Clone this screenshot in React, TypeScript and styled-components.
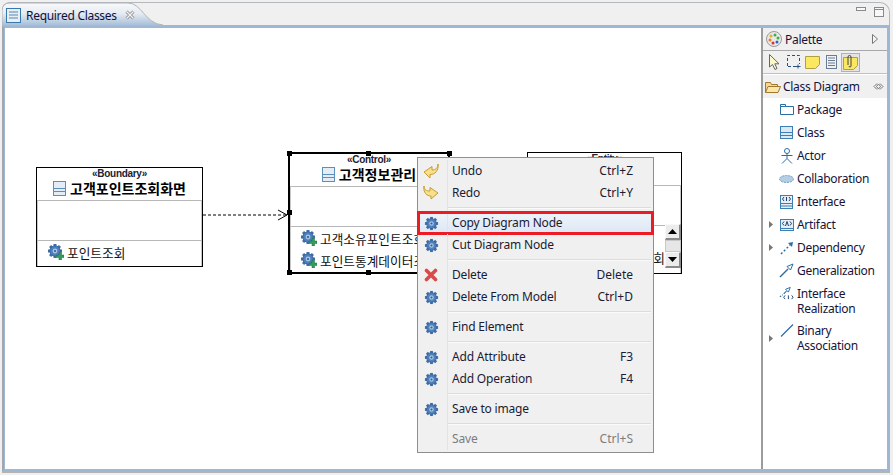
import React, { FunctionComponent } from "react";
import styled, { createGlobalStyle } from "styled-components";

const GlobalStyle = createGlobalStyle`
  html, body { margin: 0; padding: 0; background: #f0f0f0; }
  body { font-family: "Noto Sans CJK KR", "Liberation Sans", sans-serif; }
`;

const KO = `"Noto Sans CJK KR", "Noto Sans", sans-serif`;
const UI = `"Noto Sans", "Open Sans", "Liberation Sans", sans-serif`;

// window chrome
const Window = styled.div`
  width: 893px;
  height: 475px;
  overflow: hidden;
  display: flex;
  flex-direction: column;
  background: #f0f0f0;
  font-family: ${UI};
  font-size: 12px;
  letter-spacing: -0.3px;
  color: #1a1a2e;
  box-sizing: border-box;
  padding: 2px 3px 3px 2px;
`;
const TabStrip = styled.div`
  height: 22px;
  flex: none;
  position: relative;
  display: flex;
  align-items: flex-start;
  justify-content: flex-end;
  background: #f0f0f0;
  border: 1px solid #b4b8bc;
  border-bottom: none;
  border-radius: 8px 10px 0 0;
`;
const TabShape = styled.svg`
  position: absolute;
  left: -1px;
  top: -1px;
`;
const TabLabel = styled.div`
  position: absolute;
  left: 3px;
  top: 2px;
  display: flex;
  align-items: center;
  gap: 5px;
  height: 20px;
  font-size: 12px;
  color: #10103a;
`;
const TabClose = styled.svg`
  margin-left: 3px;
`;
const WinButtons = styled.div`
  display: flex;
  gap: 8px;
  align-items: flex-start;
  padding: 4px 5px 0 0;
`;
const Body = styled.div`
  flex: 1;
  display: flex;
  min-height: 0;
  border-style: solid;
  border-width: 3px 3px 3px 2px;
  border-color: #9fb7d2 #9fb7d2 #9fb7d2 #a3a7ab;
  box-shadow: 0 1px 0 #b4b4b4;
  background: #fff;
`;

// diagram
const Canvas = styled.div`
  flex: 1;
  position: relative;
  background: #fff;
  overflow: hidden;
  border-left: 1px solid #9fb7d2;
`;
const Node = styled.div<{ $x: number; $y: number; $w: number; $h: number; $bw?: number }>`
  position: absolute;
  left: ${(p) => p.$x}px;
  top: ${(p) => p.$y}px;
  width: ${(p) => p.$w}px;
  height: ${(p) => p.$h}px;
  box-sizing: border-box;
  border: ${(p) => p.$bw ?? 1}px solid #000;
  background: #fff;
  display: flex;
  flex-direction: column;
  letter-spacing: 0;
`;
const NodeHead = styled.div`
  height: 32px;
  flex: none;
  display: flex;
  flex-direction: column;
  align-items: center;
`;
const Stereotype = styled.div`
  font-family: "Liberation Sans", sans-serif;
  font-size: 10px;
  line-height: 10px;
  height: 11px;
  box-sizing: border-box;
  font-weight: bold;
  letter-spacing: -0.3px;
  color: #223;
  padding-top: 1px;
`;
const NodeTitle = styled.div`
  display: flex;
  align-items: center;
  gap: 4px;
  font-family: ${KO};
  font-weight: 700;
  font-size: 14px;
  line-height: 18px;
  white-space: nowrap;
  color: #000;
`;
const Compartment = styled.div`
  height: 40px;
  flex: none;
  border-top: 1px solid #b8b8b8;
  border-left: 1px solid #c8c8c8;
  border-right: 1px solid #c8c8c8;
  box-sizing: border-box;
`;
const OpList = styled.div<{ $end?: boolean }>`
  flex: 1;
  border-top: 1px solid #b8b8b8;
  border-left: 1px solid #c8c8c8;
  border-right: 1px solid #c8c8c8;
  display: flex;
  flex-direction: column;
  align-items: ${(p) => (p.$end ? "flex-end" : "flex-start")};
  padding: ${(p) => (p.$end ? "20px 15px 0 0" : "0 0 0 10px")};
  overflow: hidden;
`;
const Op = styled.div`
  display: flex;
  align-items: center;
  gap: 3px;
  height: 22px;
  flex: none;
  font-family: ${KO};
  font-size: 12.7px;
  white-space: nowrap;
  color: #111;
`;
const Handle = styled.div<{ $x: number; $y: number }>`
  position: absolute;
  left: ${(p) => p.$x}px;
  top: ${(p) => p.$y}px;
  width: 5px;
  height: 5px;
  background: #000;
`;
const Arrow = styled.svg`
  position: absolute;
  left: 198px;
  top: 178px;
`;
const ScrollBar = styled.div`
  position: absolute;
  left: 660px;
  top: 196px;
  width: 16px;
  height: 44px;
  display: flex;
  flex-direction: column;
  background: #f0f0f0;
`;
const ScrollBtn = styled.div`
  height: 16px;
  flex: none;
  box-sizing: border-box;
  border-style: solid;
  border-width: 1px 2px 2px 1px;
  border-color: #f8f8f8 #8a8a8a #8a8a8a #f8f8f8;
  background: #ececec;
  display: flex;
  align-items: center;
  justify-content: center;
`;
const ScrollThumb = styled.div`
  flex: 1;
  box-sizing: border-box;
  border: 1px solid #c8c8c8;
  background: #e6e6e6;
`;

// context menu
const Menu = styled.div`
  position: absolute;
  left: 412px;
  top: 129px;
  width: 237px;
  height: 296px;
  box-sizing: border-box;
  border: 1px solid #8f8f8f;
  background: #f0f0f0;
  padding: 2px;
  display: flex;
  flex-direction: column;
  font-size: 12px;
  letter-spacing: -0.18px;
  color: #1b1b33;
`;
const MenuRow = styled.div<{ $disabled?: boolean; $hot?: boolean }>`
  height: 22px;
  flex: none;
  display: grid;
  grid-template-columns: 28px 1fr auto;
  align-items: center;
  position: relative;
  color: ${(p) => (p.$disabled ? "#7d7d7d" : "inherit")};
  background: ${(p) =>
    p.$hot ? "linear-gradient(#f0f4fa, #dbe7f5)" : "transparent"};
`;
const MenuIcon = styled.div`
  display: flex;
  justify-content: center;
  align-items: center;
  height: 100%;
  box-sizing: border-box;
  border-right: 1px solid #e2e3e3;
  padding-right: 5px;
`;
const MenuLabel = styled.span`
  padding-left: 4px;
  margin-top: -2px;
`;
const MenuKey = styled.span`
  padding-right: 18px;
  margin-top: -2px;
  text-align: right;
  letter-spacing: 0;
`;
const MenuSep = styled.div`
  height: 8px;
  flex: none;
  display: grid;
  grid-template-columns: 28px 1fr;
  align-items: center;
  &::before {
    content: "";
    height: 100%;
    box-sizing: border-box;
    border-right: 1px solid #e2e3e3;
  }
  &::after {
    content: "";
    height: 2px;
    background: #dcdcdc;
    border-bottom: 1px solid #fafafa;
    box-sizing: border-box;
  }
`;
const HotBox = styled.div`
  position: absolute;
  left: -3px;
  right: -3px;
  top: -1px;
  bottom: -1px;
  border: 3px solid #ed1c24;
  pointer-events: none;
`;

// palette
const Palette = styled.div`
  width: 124px;
  flex: none;
  border-left: 2px solid #9c9c9c;
  background: #fff;
  display: flex;
  flex-direction: column;
  color: #14143a;
`;
const PaletteHead = styled.div`
  height: 22px;
  display: flex;
  align-items: center;
  background: #f0f0f0;
  border-bottom: 1px solid #a8a8a8;
  padding: 0 9px 0 3px;
  gap: 3px;
  font-size: 12px;
`;
const Spacer = styled.div`
  flex: 1;
`;
const ToolRow = styled.div`
  height: 22px;
  display: flex;
  align-items: center;
  background: #f0f0f0;
  padding-left: 2px;
  border-bottom: 1px solid #c0c0c0;
`;
const ToolBtn = styled.div<{ $on?: boolean }>`
  width: 19px;
  height: 19px;
  display: flex;
  align-items: center;
  justify-content: center;
  box-sizing: border-box;
  ${(p) => (p.$on ? "border: 1px solid #b0b0b0; background: #e4e4e4;" : "")}
`;
const Drawer = styled.div`
  height: 23px;
  margin-top: 1px;
  display: flex;
  align-items: center;
  padding: 0 3px 0 2px;
  gap: 2px;
  background: #f0f0f0;
`;
const PalList = styled.div`
  display: flex;
  flex-direction: column;
`;
const PalItem = styled.div<{ $two?: boolean }>`
  min-height: 23px;
  display: grid;
  grid-template-columns: 8px 15px 1fr;
  column-gap: 2px;
  align-items: center;
  padding: ${(p) => (p.$two ? "4px 0 3px 6px" : "0 0 0 6px")};
  line-height: 15px;
`;
const PalIcon = styled.div<{ $two?: boolean }>`
  display: flex;
  align-items: center;
  justify-content: center;
  height: 15px;
  align-self: ${(p) => (p.$two ? "start" : "center")};
`;
const PalText = styled.div`
  font-size: 12px;
  padding-left: 1px;
`;

// icons
const ClassIcon: FunctionComponent = () => (
  <svg width="13" height="15" viewBox="0 0 13 15">
    <rect x="0.5" y="0.5" width="12" height="14" fill="#e4edf6" stroke="#5b90bd" />
    <path d="M1 7.5H12M1 10.5H12" stroke="#5b90bd" />
  </svg>
);

const Gear: FunctionComponent<{ plus?: boolean }> = ({ plus }) => (
  <svg width={plus ? 16 : 15} height={plus ? 16 : 15} viewBox="0 0 16 16">
    <g transform={plus ? "translate(7 7)" : "translate(8 8)"}>
      {[0, 45, 90, 135].map((a) => (
        <rect key={a} x="-1.5" y="-7" width="3" height="14" fill="#3f6ea8" transform={`rotate(${a})`} />
      ))}
      <circle r="5.2" fill="#4f80bc" stroke="#2f5c94" strokeWidth="0.7" />
      <circle r="2.4" fill="#a8c6e6" />
      <circle r="1.1" fill="#2f5c94" />
    </g>
    {plus && <path d="M11 8.5h2.5V11H16v2.5h-2.5V16H11v-2.5H8.5V11H11z" fill="#2f9e5a" stroke="#1d6e3c" strokeWidth="0.5" />}
  </svg>
);

const UndoIcon: FunctionComponent = () => (
  <svg width="16" height="16" viewBox="0 0 16 16">
    <path d="M15 1C15 5 12.5 7 9 7V3.5L1 9l6 6v-3.5c5 0 9-4 8-10.5z" fill="#f8e08a" stroke="#c89a30" strokeLinejoin="round" />
  </svg>
);
const RedoIcon: FunctionComponent = () => (
  <svg width="16" height="16" viewBox="0 0 16 16">
    <path d="M1 1c0 4 2.5 5 6 5V2.5L15 8l-7 6v-3C4 11 0 8 1 1z" fill="#f8e08a" stroke="#c89a30" strokeLinejoin="round" />
  </svg>
);
const DeleteIcon: FunctionComponent = () => (
  <svg width="14" height="14" viewBox="0 0 14 14">
    <path d="M2.5 2.5l9 9M11.5 2.5l-9 9" stroke="#d84a4a" strokeWidth="3.6" strokeLinecap="round" />
  </svg>
);

const menuRow = (label: string, shortcut: string, icon?: React.ReactNode, disabled?: boolean, hot?: boolean) => (
  <MenuRow $disabled={disabled} $hot={hot}>
    <MenuIcon>{icon}</MenuIcon>
    <MenuLabel>{label}</MenuLabel>
    <MenuKey>{shortcut}</MenuKey>
    {hot && <HotBox />}
  </MenuRow>
);

const palItems: { name: string[]; arrow?: boolean; icon: React.ReactNode }[] = [
  {
    name: ["Package"],
    icon: (
      <svg width="14" height="11" viewBox="0 0 14 11">
        <path d="M.5 10.5V.5h5v2h8v8z" fill="#fff" stroke="#2a6ea6" />
        <path d="M.5 2.5h5" stroke="#2a6ea6" />
      </svg>
    ),
  },
  {
    name: ["Class"],
    icon: (
      <svg width="13" height="13" viewBox="0 0 13 13">
        <rect x="0.5" y="0.5" width="12" height="12" fill="#dbe7f3" stroke="#3b7fb4" />
        <path d="M1 6.5H12M1 9.5H12" stroke="#3b7fb4" />
      </svg>
    ),
  },
  {
    name: ["Actor"],
    icon: (
      <svg width="12" height="16" viewBox="0 0 12 16">
        <circle cx="6" cy="3" r="2.5" fill="#fff" stroke="#2a6ea6" />
        <path d="M6 5.5V10.5M.5 7.5H11.5M1 15.5L6 10.5L11 15.5" fill="none" stroke="#2a6ea6" />
      </svg>
    ),
  },
  {
    name: ["Collaboration"],
    icon: (
      <svg width="15" height="8" viewBox="0 0 15 8">
        <ellipse cx="7.5" cy="4" rx="7" ry="3.5" fill="#b4cde4" stroke="#6c9cc4" strokeDasharray="2 1" />
      </svg>
    ),
  },
  {
    name: ["Interface"],
    icon: (
      <svg width="13" height="14" viewBox="0 0 13 14">
        <rect x="0.5" y="0.5" width="12" height="13" fill="#e6eff7" stroke="#3b7fb4" />
        <path d="M1 8.5H12M1 11H12" stroke="#3b7fb4" />
        <path d="M4 2L2.5 4L4 6M9 2L10.5 4L9 6M6.5 2v4" fill="none" stroke="#20406a" />
      </svg>
    ),
  },
  {
    name: ["Artifact"],
    arrow: true,
    icon: (
      <svg width="14" height="12" viewBox="0 0 14 12">
        <rect x="0.5" y="0.5" width="13" height="11" fill="#e6eff7" stroke="#3b7fb4" />
        <path d="M1 9.5H13" stroke="#3b7fb4" />
        <path d="M4 2.5L2.5 4.5L4 6.5M10 2.5L11.5 4.5L10 6.5M5.5 7L7 2.5L8.5 7" fill="none" stroke="#20406a" />
      </svg>
    ),
  },
  {
    name: ["Dependency"],
    arrow: true,
    icon: (
      <svg width="14" height="14" viewBox="0 0 14 14">
        <path d="M1 13L10 4" stroke="#2a6ea6" strokeDasharray="2 2" strokeWidth="1.5" />
        <path d="M8 2l5-1-1 5z" fill="#2a6ea6" />
      </svg>
    ),
  },
  {
    name: ["Generalization"],
    icon: (
      <svg width="15" height="15" viewBox="0 0 15 15">
        <path d="M1 14L9 6" stroke="#2a6ea6" strokeWidth="1.5" />
        <path d="M8 3.5l6-2.5-2.5 6z" fill="#fff" stroke="#2a6ea6" />
      </svg>
    ),
  },
  {
    name: ["Interface", "Realization"],
    icon: (
      <svg width="16" height="15" viewBox="0 0 16 15">
        <path d="M1 11L4 9" stroke="#2a6ea6" strokeDasharray="1.5 1.5" strokeWidth="1.5" />
        <path d="M5 8l3-3" stroke="#2a6ea6" strokeWidth="1.2" />
        <path d="M7 3l5-2-2 5z" fill="#fff" stroke="#2a6ea6" />
        <path d="M6.5 9.5L5 11.5L6.5 13.5M13.5 9.5L15 11.5L13.5 13.5M10 9.5v4" fill="none" stroke="#20406a" />
      </svg>
    ),
  },
  {
    name: ["Binary", "Association"],
    arrow: true,
    icon: (
      <svg width="14" height="13" viewBox="0 0 14 13">
        <path d="M1 12.5L13 .5" stroke="#2a6ea6" strokeWidth="1.3" />
      </svg>
    ),
  },
];

const Twist: FunctionComponent = () => (
  <svg width="4" height="7" viewBox="0 0 4 7">
    <path d="M0 0l4 3.5L0 7z" fill="#777" />
  </svg>
);

const App: FunctionComponent = () => {
  return (
    <Window>
      <GlobalStyle />
      {/* tab strip */}
      <TabStrip>
        <TabShape width="165" height="24" viewBox="0 0 165 24">
          <defs>
            <linearGradient id="tabFill" x1="0" y1="0" x2="0" y2="1">
              <stop offset="0" stopColor="#f8f9fb" />
              <stop offset="0.45" stopColor="#e6ecf3" />
              <stop offset="1" stopColor="#a3bcd8" />
            </linearGradient>
          </defs>
          <path
            d="M0 24V9Q0 1 8 1H126C140 1 143 22 161 23V24Z"
            fill="url(#tabFill)"
            stroke="#b0b4b8"
            strokeWidth="1"
          />
        </TabShape>
        <TabLabel>
          <svg width="15" height="15" viewBox="0 0 15 15">
            <rect x="0.5" y="0.5" width="14" height="14" fill="#e6eef6" stroke="#3a78ac" />
            <path d="M3 4H12M3 7H12M3 10H12" stroke="#5a87ad" />
          </svg>
          <span>Required Classes</span>
          <TabClose width="10" height="10" viewBox="0 0 10 10">
            <path d="M1.5 1.5l7 7M8.5 1.5l-7 7" stroke="#888" strokeWidth="3" />
            <path d="M1.5 1.5l7 7M8.5 1.5l-7 7" stroke="#f4f4f4" strokeWidth="1.4" />
          </TabClose>
        </TabLabel>
        <WinButtons>
          <svg width="10" height="4" viewBox="0 0 10 4">
            <rect x="0.5" y="0.5" width="9" height="3" fill="#f8f8f8" stroke="#8a8a8a" />
          </svg>
          <svg width="10" height="10" viewBox="0 0 10 10">
            <rect x="0.5" y="0.5" width="9" height="9" fill="#f8f8f8" stroke="#8a8a8a" />
            <path d="M1 2.5H9" stroke="#8a8a8a" />
          </svg>
        </WinButtons>
      </TabStrip>

      <Body>
        <Canvas>
          {/* Boundary */}
          <Node $x={31} $y={139} $w={167} $h={100}>
            <NodeHead>
              <Stereotype>«Boundary»</Stereotype>
              <NodeTitle>
                <ClassIcon />
                고객포인트조회화면
              </NodeTitle>
            </NodeHead>
            <Compartment />
            <OpList>
              <Op>
                <Gear plus />
                포인트조회
              </Op>
            </OpList>
          </Node>

          <Arrow width="90" height="16" viewBox="0 0 90 16">
            <path d="M0 9H84" stroke="#000" strokeDasharray="3 2" />
            <path d="M75 4L84 9L75 14" fill="none" stroke="#000" />
          </Arrow>

          {/* Entity behind the menu */}
          <Node $x={522} $y={124} $w={155} $h={122}>
            <NodeHead>
              <Stereotype>«Entity»</Stereotype>
            </NodeHead>
            <Compartment />
            <OpList $end>
              <Op>포인트조회</Op>
            </OpList>
          </Node>

          {/* Control */}
          <Node $x={283} $y={124} $w={162} $h={122} $bw={2}>
            <NodeHead>
              <Stereotype>«Control»</Stereotype>
              <NodeTitle>
                <ClassIcon />
                고객정보관리
              </NodeTitle>
            </NodeHead>
            <Compartment />
            <OpList>
              <Op>
                <Gear plus />
                고객소유포인트조회
              </Op>
              <Op>
                <Gear plus />
                포인트통계데이터조회
              </Op>
            </OpList>
          </Node>
          <Handle $x={282} $y={123} />
          <Handle $x={361} $y={123} />
          <Handle $x={442} $y={123} />
          <Handle $x={282} $y={182} />
          <Handle $x={282} $y={242} />
          <Handle $x={361} $y={242} />
          <Handle $x={442} $y={242} />

          <ScrollBar>
            <ScrollBtn>
              <svg width="9" height="5" viewBox="0 0 9 5">
                <path d="M4.5 0L9 5H0z" fill="#000" />
              </svg>
            </ScrollBtn>
            <ScrollThumb />
            <ScrollBtn>
              <svg width="9" height="5" viewBox="0 0 9 5">
                <path d="M0 0h9L4.5 5z" fill="#000" />
              </svg>
            </ScrollBtn>
          </ScrollBar>

          <Menu>
            {menuRow("Undo", "Ctrl+Z", <UndoIcon />)}
            {menuRow("Redo", "Ctrl+Y", <RedoIcon />)}
            <MenuSep />
            {menuRow("Copy Diagram Node", "", <Gear />, false, true)}
            {menuRow("Cut Diagram Node", "", <Gear />)}
            <MenuSep />
            {menuRow("Delete", "Delete", <DeleteIcon />)}
            {menuRow("Delete From Model", "Ctrl+D", <Gear />)}
            <MenuSep />
            {menuRow("Find Element", "", <Gear />)}
            <MenuSep />
            {menuRow("Add Attribute", "F3", <Gear />)}
            {menuRow("Add Operation", "F4", <Gear />)}
            <MenuSep />
            {menuRow("Save to image", "", <Gear />)}
            <MenuSep />
            {menuRow("Save", "Ctrl+S", undefined, true)}
          </Menu>
        </Canvas>

        <Palette>
          <PaletteHead>
            <svg width="16" height="16" viewBox="0 0 16 16">
              <circle cx="8" cy="8" r="7.5" fill="#e8e8e8" stroke="#9a9a9a" />
              <circle cx="5" cy="5" r="1.5" fill="#e4b020" />
              <circle cx="9" cy="4" r="1.5" fill="#3fae49" />
              <circle cx="12" cy="7" r="1.5" fill="#3fae49" />
              <circle cx="4" cy="9" r="1.5" fill="#ee7b1d" />
              <circle cx="7" cy="12" r="1.5" fill="#d8362a" />
              <circle cx="11" cy="11" r="1.5" fill="#2a66c8" />
            </svg>
            <span>Palette</span>
            <Spacer />
            <svg width="6" height="10" viewBox="0 0 6 10">
              <path d="M.5.5L5.5 5L.5 9.5z" fill="#f4f4f4" stroke="#777" />
            </svg>
          </PaletteHead>
          <ToolRow>
            <ToolBtn>
              <svg width="11" height="16" viewBox="0 0 11 16">
                <path d="M.5.5V13L3.5 10.5L6 15.5L8 14.5L5.8 9.8H10z" fill="#fbf7c8" stroke="#666" />
              </svg>
            </ToolBtn>
            <ToolBtn>
              <svg width="14" height="14" viewBox="0 0 14 14">
                <path d="M.5 11V.5H12.5V9M9 11.5H.5" fill="none" stroke="#27507c" strokeDasharray="3 2" />
                <path d="M11 9.5v4M9 11.5h4.5" stroke="#27507c" />
              </svg>
            </ToolBtn>
            <ToolBtn>
              <svg width="15" height="13" viewBox="0 0 15 13">
                <path d="M.5.5h14v8l-4 4H.5z" fill="#fce860" stroke="#b0a040" />
              </svg>
            </ToolBtn>
            <ToolBtn>
              <svg width="11" height="14" viewBox="0 0 11 14">
                <rect x="0.5" y="0.5" width="10" height="13" fill="#eef2f6" stroke="#6a7c90" />
                <path d="M2 3H9M2 5.5H9M2 8H9M2 10.5H9" stroke="#6a7c90" />
              </svg>
            </ToolBtn>
            <ToolBtn $on>
              <svg width="15" height="16" viewBox="0 0 15 16">
                <path d="M.5 3.5h14v8l-4 4H.5z" fill="#fce860" stroke="#b0a040" />
                <path d="M5 11V3a1.5 1.5 0 0 1 3 0v9a1 1 0 0 1-2 0" fill="none" stroke="#444" />
              </svg>
            </ToolBtn>
          </ToolRow>
          <Drawer>
            <svg width="16" height="12" viewBox="0 0 16 12">
              <path d="M.5 11.5V1.5h5l1 2h6v2" fill="#f5d890" stroke="#a07830" />
              <path d="M.5 11.5L3 5.5h12.5L13 11.5z" fill="#fbe6a8" stroke="#a07830" />
            </svg>
            <span>Class Diagram</span>
            <Spacer />
            <svg width="11" height="7" viewBox="0 0 11 7">
              <path d="M4 .5L1 3.5L4 6.5M7 .5L10 3.5L7 6.5M3.5 3.5L5.5 1M3.5 3.5L5.5 6M7.5 3.5L5.5 1M7.5 3.5L5.5 6" fill="none" stroke="#777" />
            </svg>
          </Drawer>
          <PalList>
            {palItems.map((it) => (
              <PalItem key={it.name.join(" ")} $two={it.name.length > 1}>
                {it.arrow ? <Twist /> : <span />}
                <PalIcon $two={it.name.length > 1}>{it.icon}</PalIcon>
                <PalText>
                  {it.name.map((n) => (
                    <div key={n}>{n}</div>
                  ))}
                </PalText>
              </PalItem>
            ))}
          </PalList>
        </Palette>
      </Body>
    </Window>
  );
};

export default App;
